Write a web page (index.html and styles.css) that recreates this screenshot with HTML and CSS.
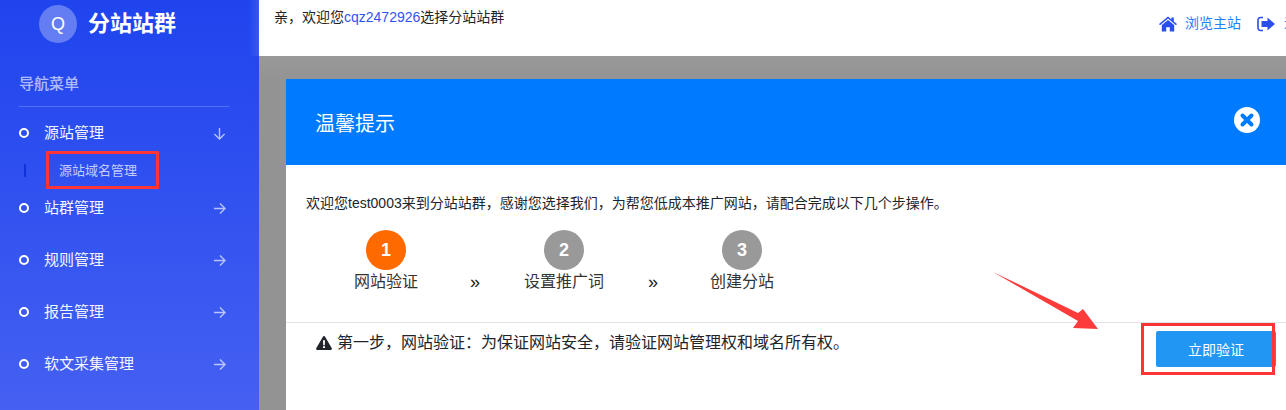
FILE: index.html
```html
<!DOCTYPE html>
<html lang="zh">
<head>
<meta charset="utf-8">
<title>分站站群</title>
<link rel="stylesheet" href="styles.css">
</head>
<body>
<div class="app">
  <aside class="sidebar">
    <div class="brand"><span class="brand-mark">Q</span><span class="brand-name">分站站群</span></div>
    <div class="nav-title">导航菜单</div>
    <ul class="menu">
      <li class="menu-item"><i class="ring"></i><span class="menu-text">源站管理</span>
        <svg class="chev" viewBox="0 0 14 14"><path d="M7 1v12M1.500 7.500 7 13l5.500-5.500"/></svg></li>
      <li class="sub-item"><i class="sub-mark"></i><span>源站域名管理</span></li>
      <li class="menu-item"><i class="ring"></i><span class="menu-text">站群管理</span>
        <svg class="chev" viewBox="0 0 14 14"><path d="M1 7h12M7.500 1.500 13 7l-5.500 5.500"/></svg></li>
      <li class="menu-item"><i class="ring"></i><span class="menu-text">规则管理</span>
        <svg class="chev" viewBox="0 0 14 14"><path d="M1 7h12M7.500 1.500 13 7l-5.500 5.500"/></svg></li>
      <li class="menu-item"><i class="ring"></i><span class="menu-text">报告管理</span>
        <svg class="chev" viewBox="0 0 14 14"><path d="M1 7h12M7.500 1.500 13 7l-5.500 5.500"/></svg></li>
      <li class="menu-item"><i class="ring"></i><span class="menu-text">软文采集管理</span>
        <svg class="chev" viewBox="0 0 14 14"><path d="M1 7h12M7.500 1.500 13 7l-5.500 5.500"/></svg></li>
    </ul>
  </aside>
  <main class="main">
    <header class="topbar">
      <p class="welcome">亲，欢迎您<span class="user">cqz2472926</span>选择分站站群</p>
      <div class="top-links">
        <svg class="top-icon" viewBox="0 0 18 15"><path d="M9 0 0 7.600l1 1.100L9 2l8 6.700 1-1.100-3.200-2.700V1h-2.400v2L9 0z"/><path d="M9 3.400 2.800 8.600V15h4.400v-4.200h3.600V15h4.400V8.600L9 3.400z"/></svg>
        <span class="top-link">浏览主站</span>
        <svg class="top-icon exit" viewBox="0 0 18 16"><path d="M6 1.500H3.500A2.500 2.500 0 0 0 1 4v8a2.500 2.500 0 0 0 2.500 2.500H6" fill="none" stroke="currentColor" stroke-width="1.600"/><path d="M10.500 1.500 18 8l-7.500 6.500V11H4.500V5h6V1.500z"/></svg>
        <span class="top-link">退出</span>
      </div>
    </header>
    <section class="backdrop">
      <div class="modal">
        <div class="modal-head">
          <h2>温馨提示</h2>
          <svg class="close" viewBox="0 0 26 26"><circle cx="13" cy="13" r="13" fill="#fff"/><path d="M8.500 8.500l9 9M17.500 8.500l-9 9" stroke="#007bff" stroke-width="4" stroke-linecap="round"/></svg>
        </div>
        <p class="intro">欢迎您test0003来到分站站群，感谢您选择我们，为帮您低成本推广网站，请配合完成以下几个步操作。</p>
        <div class="steps">
          <div class="step"><span class="num active">1</span><span class="label">网站验证</span></div>
          <span class="sep">»</span>
          <div class="step"><span class="num">2</span><span class="label">设置推广词</span></div>
          <span class="sep">»</span>
          <div class="step"><span class="num">3</span><span class="label">创建分站</span></div>
        </div>
        <div class="modal-foot">
          <p class="notice">
            <svg class="warn" viewBox="0 0 16 14"><path d="M8 0c.5 0 .9.300 1.100.700l6.700 11.600c.4.700-.1 1.700-1 1.700H1.200c-.9 0-1.400-1-1-1.700L6.900.700C7.100.300 7.500 0 8 0z" fill="#212529"/><path d="M7 4.200h2l-.2 5H7.200l-.2-5zM7 10.200h2V12H7z" fill="#fff"/></svg>
            第一步，网站验证：为保证网站安全，请验证网站管理权和域名所有权。
          </p>
          <button class="verify" type="button">立即验证</button>
        </div>
      </div>
    </section>
  </main>
  <div class="mark mark-sub"></div>
  <div class="mark mark-btn"></div>
  <svg class="pointer" viewBox="0 0 110 62"><polygon points="0,0 85,41 90,37 105,57 80,56 85,49" fill="#fd3b3b"/></svg>
</div>
</body>
</html>
```
FILE: styles.css
```css
* { box-sizing: border-box; }
html, body { margin: 0; height: 100%; overflow: hidden; }
body {
  font-family: "Liberation Sans", "Noto Sans CJK SC", sans-serif;
  color: #212529;
  background: #fff;
}
p, h2, ul { margin: 0; padding: 0; }
.app { position: relative; display: flex; width: 1286px; height: 410px; overflow: hidden; }

.sidebar {
  flex: 0 0 259px;
  color: #fff;
  background:
    linear-gradient(90deg, rgba(255,255,255,0), rgba(255,255,255,.1)) right top / 10px 56px no-repeat,
    linear-gradient(180deg, #1f44ee 0%, #4560f2 100%);
}
.brand { display: flex; align-items: center; height: 48px; padding: 0 0 0 39px; }
.brand-mark {
  width: 38px; height: 38px; margin-right: 11px; border-radius: 50%;
  background: rgba(255,255,255,.3);
  display: flex; align-items: center; justify-content: center;
  font-size: 18px;
}
.brand-name { font-size: 22px; font-weight: 700; line-height: 52px; }
.nav-title {
  margin: 0 30px 0 19px; height: 59px; padding-top: 26px;
  font-size: 15px; font-weight: 500; line-height: 20px;
  color: rgba(255,255,255,.65);
  border-bottom: 1px solid rgba(255,255,255,.2);
}
.menu { list-style: none; }
.menu-item { display: flex; align-items: center; height: 52px; padding: 0 33px 0 19px; }
.ring { width: 10px; height: 10px; border: 2.500px solid #fff; border-radius: 50%; margin-right: 15px; }
.menu-text { flex: 1; font-size: 15px; line-height: 20px; color: #f4f6ff; }
.chev { width: 13px; height: 13px; fill: none; stroke: rgba(255,255,255,.65); stroke-width: 1.500; }
.sub-item { display: flex; align-items: center; height: 23px; padding-left: 24px; font-size: 13px; color: rgba(255,255,255,.72); }
.sub-item span { padding-bottom: 2px; }
.sub-mark { width: 2px; height: 13px; margin-right: 33px; background: #1030d8; }

.main { flex: 1; min-width: 0; display: flex; flex-direction: column; }
.topbar { flex: 0 0 56px; display: flex; justify-content: space-between; padding: 7px 0 0 15px; }
.welcome { font-size: 14px; line-height: 20px; }
.user { color: #2f55f0; }
.top-links { display: flex; align-items: flex-start; padding-top: 7px; margin-right: -26px; white-space: nowrap; }
.top-icon { width: 18px; height: 16px; margin: 2px 8px 0 0; fill: #2a4df0; color: #2a4df0; }
.top-icon.exit { margin: 2px 9px 0 16px; }
.top-link { font-size: 14px; line-height: 18px; color: #1e80ff; }

.backdrop {
  flex: 1; padding: 23px 0 0 27px;
  background: linear-gradient(180deg, #999 0, #939393 24px);
}
.modal { height: 100%; background: #fff; }
.modal-head {
  height: 86px; padding: 0 26px 0 29px; background: #007bff; color: #fff;
  display: flex; align-items: center; justify-content: space-between;
}
.modal-head h2 { font-size: 20px; font-weight: 400; padding-top: 1px; }
.close { width: 26px; height: 26px; margin-top: -5px; }
.intro { padding: 28px 0 0 20px; font-size: 14px; line-height: 20px; white-space: nowrap; }
.steps { display: flex; align-items: flex-start; margin: 17px 0 0 50px; }
.step { width: 100px; display: flex; flex-direction: column; align-items: center; }
.num {
  width: 40px; height: 40px; border-radius: 50%; background: #999; color: #fff;
  display: flex; align-items: center; justify-content: center;
  font-size: 18px; font-weight: 700;
}
.num.active { background: #ff6a00; }
.label { font-size: 16px; line-height: 24px; color: #333; white-space: nowrap; }
.sep { width: 78px; padding-top: 40px; text-align: center; font-size: 18px; line-height: 24px; color: #222; }
.modal-foot {
  margin-top: 28px; padding: 8px 10px 0 30px;
  border-top: 1px solid #e2e2ea;
  display: flex; justify-content: space-between; align-items: flex-start;
}
.notice { display: flex; align-items: center; gap: 5px; padding-top: 1px; font-size: 16px; line-height: 22px; white-space: nowrap; }
.warn { width: 16px; height: 14px; }
.verify {
  width: 120px; height: 36px; border: 0; border-radius: 2px;
  background: #2196f3; color: #fff; font: inherit; font-size: 14px;
}

.mark { position: absolute; border: 3px solid #fd3535; }
.mark-sub { left: 46px; top: 151px; width: 113px; height: 38px; }
.mark-btn { left: 1141px; top: 323px; width: 134px; height: 52px; }
.pointer { position: absolute; left: 993px; top: 272px; width: 110px; height: 62px; }
```
